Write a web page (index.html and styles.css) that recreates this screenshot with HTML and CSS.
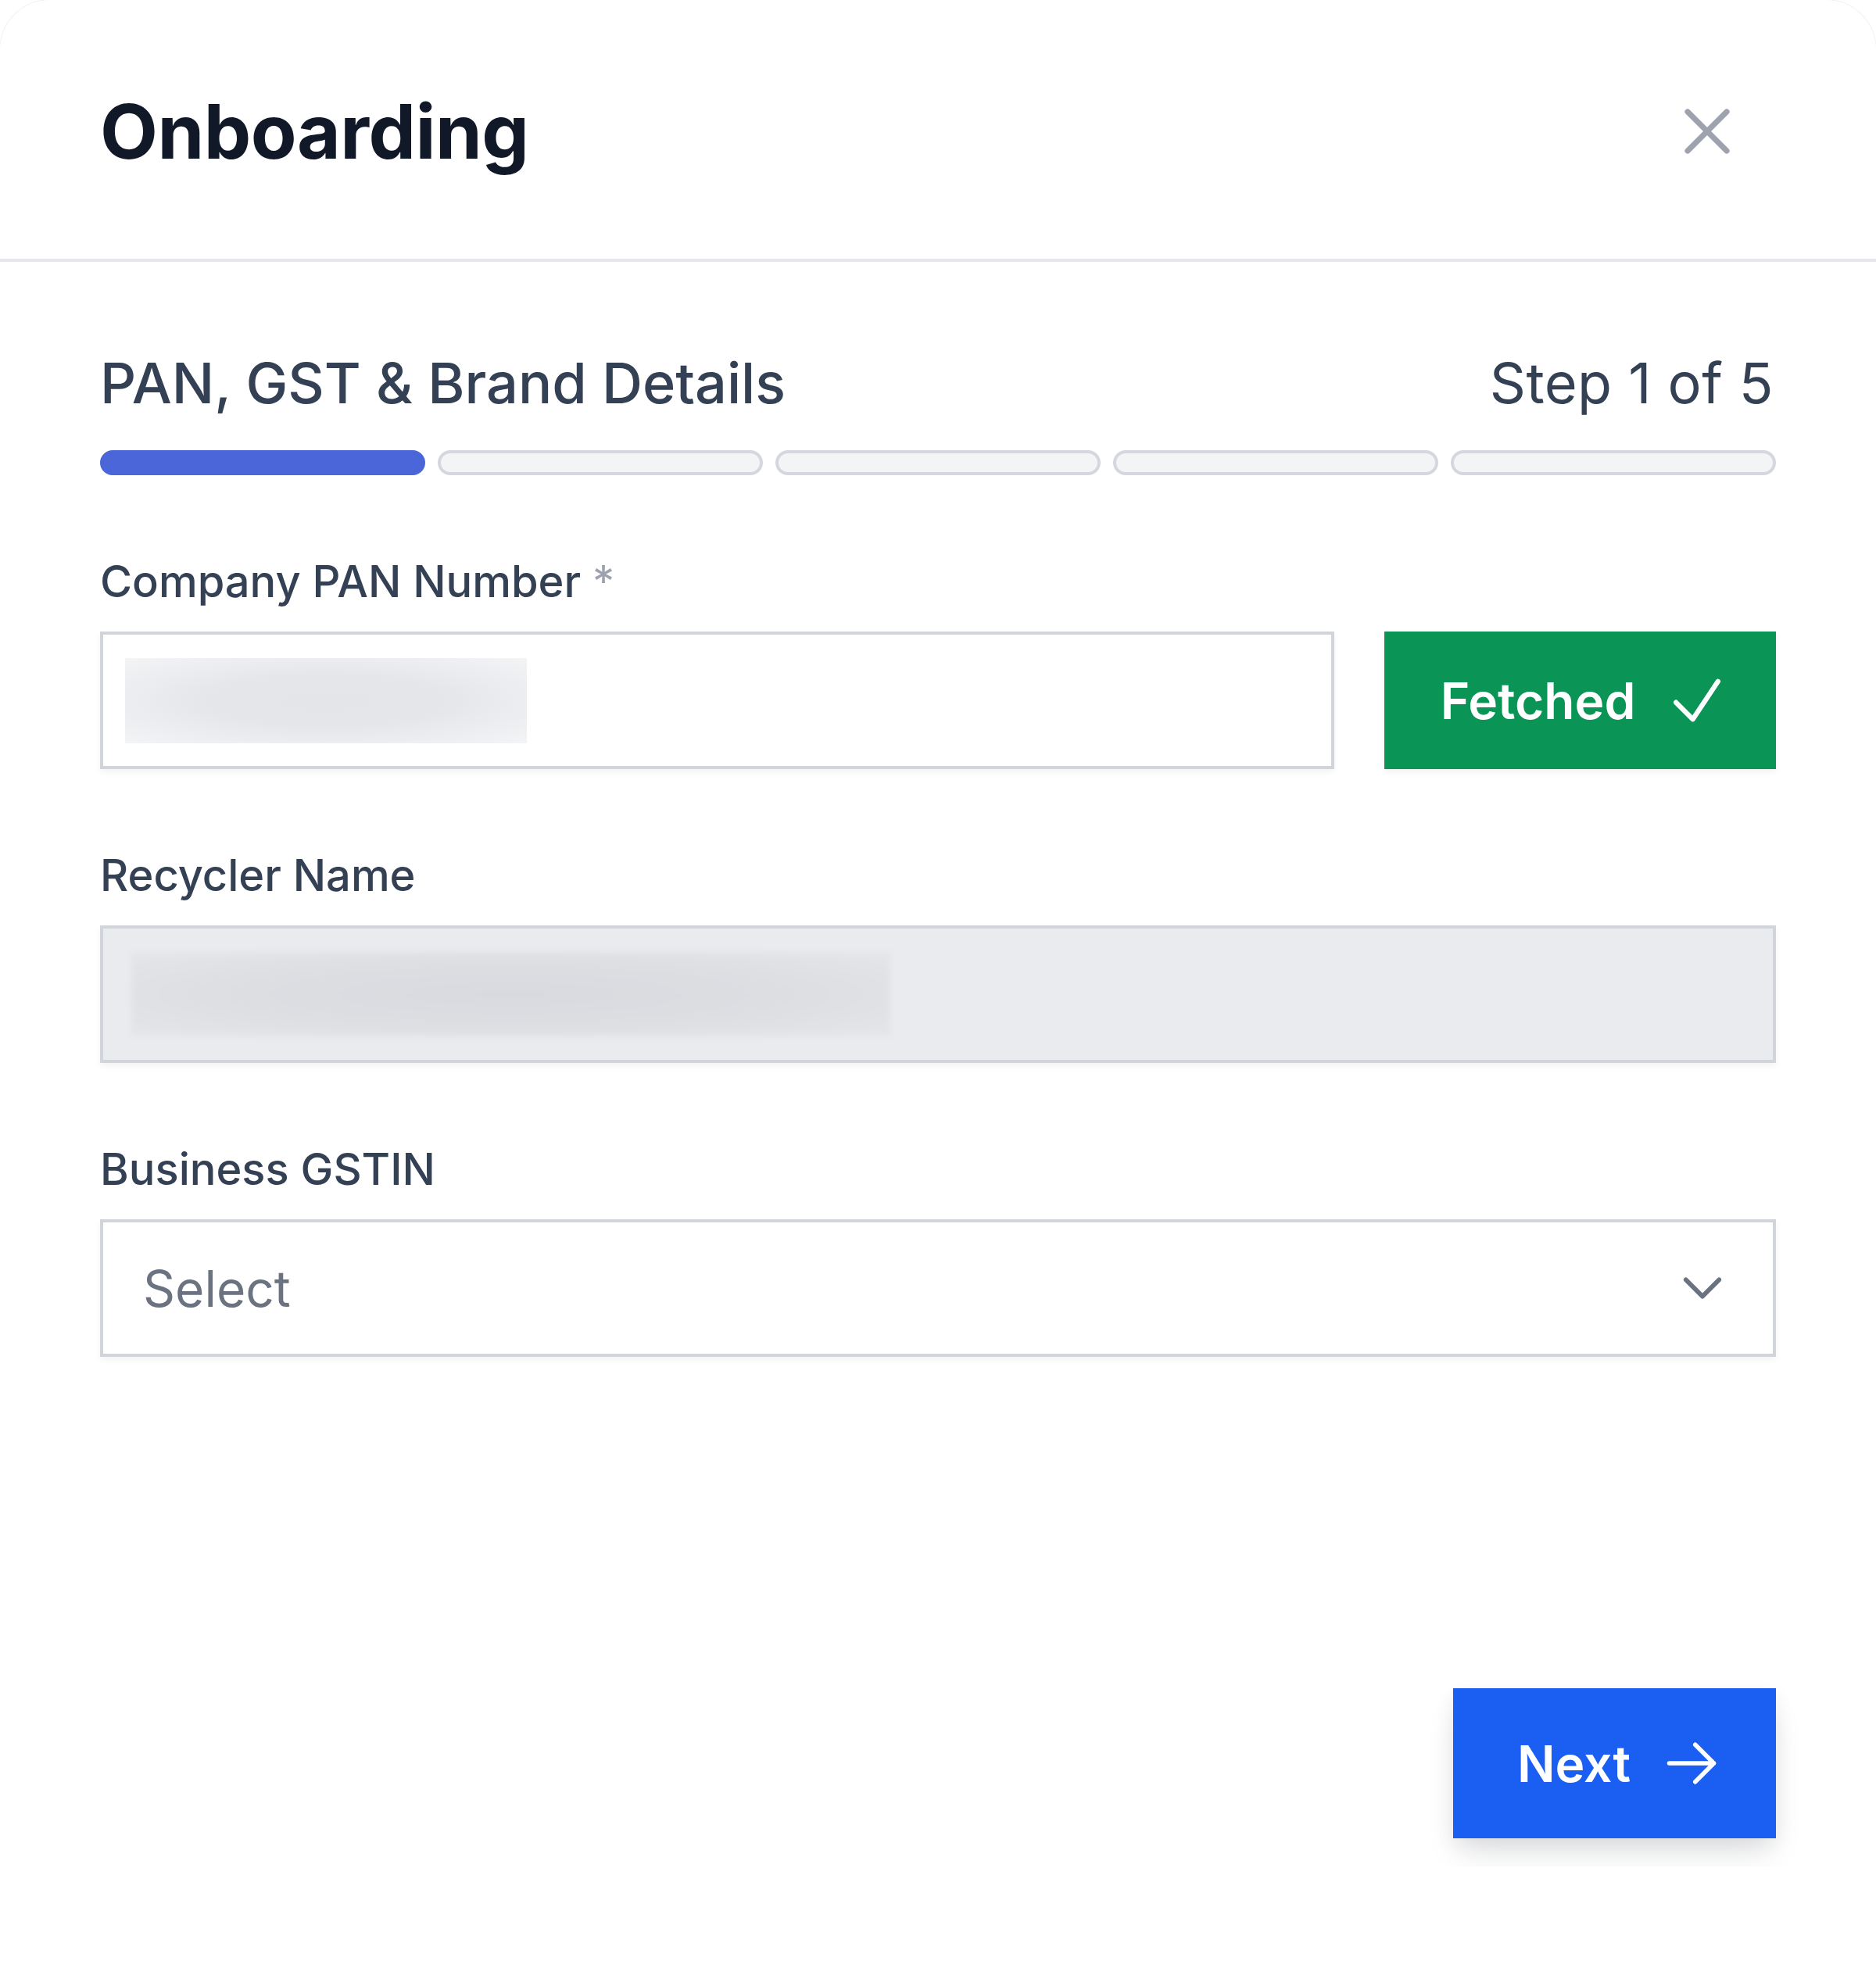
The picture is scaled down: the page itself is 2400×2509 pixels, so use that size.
FILE: index.html
```html
<!DOCTYPE html>
<html lang="en">
<head>
<meta charset="utf-8">
<title>Onboarding</title>
<link rel="stylesheet" href="styles.css">
</head>
<body>
<div class="modal">
  <header class="modal-header">
    <h1 class="modal-title">Onboarding</h1>
    <button class="close-btn" type="button" aria-label="Close">
      <svg viewBox="0 0 24 24" fill="none" stroke="currentColor" stroke-width="1.75" stroke-linecap="round" stroke-linejoin="round"><path d="M6 18L18 6M6 6l12 12"/></svg>
    </button>
  </header>
  <div class="modal-body">
    <div class="step-head">
      <h2 class="step-title">PAN, GST &amp; Brand Details</h2>
      <span class="step-count">Step 1 of 5</span>
    </div>
    <div class="progress">
      <span class="seg active"></span>
      <span class="seg"></span>
      <span class="seg"></span>
      <span class="seg"></span>
      <span class="seg"></span>
    </div>

    <div class="field">
      <label class="label">Company PAN Number <span class="req">*</span></label>
      <div class="row">
        <div class="input"><span class="redact redact-pan"></span></div>
        <button class="btn-fetched" type="button">
          <span>Fetched</span>
          <svg class="icon-check" viewBox="0 0 24 24" fill="none" stroke="currentColor" stroke-width="1.75" stroke-linecap="round" stroke-linejoin="round"><path d="M4.5 12.75l6 6 9-13.5"/></svg>
        </button>
      </div>
    </div>

    <div class="field">
      <label class="label">Recycler Name</label>
      <div class="row">
        <div class="input input-disabled"><span class="redact redact-name"></span></div>
      </div>
    </div>

    <div class="field">
      <label class="label">Business GSTIN</label>
      <div class="row">
        <div class="select">
          <span class="placeholder">Select</span>
          <svg class="icon-chevron" viewBox="0 0 24 24" fill="none" stroke="currentColor" stroke-width="2" stroke-linecap="round" stroke-linejoin="round"><path d="M19.5 8.25l-7.5 7.5-7.5-7.5"/></svg>
        </div>
      </div>
    </div>

    <div class="footer">
      <button class="btn-next" type="button">
        <span>Next</span>
        <svg class="icon-arrow" viewBox="0 0 24 24" fill="none" stroke="currentColor" stroke-width="1.75" stroke-linecap="round" stroke-linejoin="round"><path d="M13.5 4.5L21 12m0 0l-7.5 7.5M21 12H3"/></svg>
      </button>
    </div>
  </div>
</div>
</body>
</html>
```
FILE: styles.css
```css
* { box-sizing: border-box; }

html, body {
  margin: 0;
  padding: 0;
  background: #ffffff;
}

body {
  font-family: Inter, "Noto Sans", "Liberation Sans", sans-serif;
  color: #344054;
}

.modal {
  width: 2400px;
  min-height: 2509px;
  background: #ffffff;
  border-radius: 64px 64px 0 0;
  box-shadow: 0 0 0 1px rgba(17, 24, 39, 0.06);
}

.modal-header {
  height: 335px;
  padding: 5px 166px 0 128px;
  display: flex;
  align-items: center;
  justify-content: space-between;
  border-bottom: 4px solid #e5e7eb;
}

.modal-title {
  margin: 0;
  font-size: 96px;
  line-height: 128px;
  font-weight: 700;
  color: #111827;
  letter-spacing: -0.5px;
}

.close-btn {
  width: 100px;
  height: 100px;
  padding: 0;
  border: 0;
  background: transparent;
  color: #9ca3af;
  display: flex;
}

.close-btn svg {
  width: 100px;
  height: 100px;
}

.modal-body {
  margin: 0 96px;
  padding: 99px 32px 36px;
  overflow: hidden;
  display: flex;
  flex-direction: column;
}

.step-head {
  display: flex;
  justify-content: space-between;
  align-items: center;
  font-size: 72px;
  line-height: 112px;
}

.step-title {
  margin: 0;
  font-size: 72px;
  line-height: 112px;
  font-weight: 500;
  color: #344054;
}

.step-count {
  font-weight: 400;
  color: #344054;
  letter-spacing: 0.4px;
  margin-right: 3px;
}

.progress {
  margin-top: 30px;
  display: grid;
  grid-template-columns: repeat(5, 1fr);
  gap: 16px;
}

.seg {
  display: block;
  height: 32px;
  border-radius: 999px;
  background: #f3f4f6;
  border: 4px solid #d4d8de;
}

.seg.active {
  background: #4b66d9;
  border-color: #4b66d9;
}

.field {
  margin-top: 96px;
  display: flex;
  flex-direction: column;
}

.label {
  font-size: 56px;
  line-height: 80px;
  font-weight: 500;
  color: #344054;
}

.req {
  color: #9ca3af;
  font-weight: 400;
}

.row {
  margin-top: 24px;
  display: flex;
  gap: 64px;
}

.input {
  flex: 1;
  height: 176px;
  border: 4px solid #d1d5db;
  background: #ffffff;
  box-shadow: 0 4px 8px rgba(16, 24, 40, 0.05);
  padding: 28px 28px;
  display: flex;
  align-items: center;
}

.input-disabled {
  background: #eaebef;
  padding: 0 36px;
}

.redact {
  display: block;
}

.redact-pan {
  width: 514px;
  height: 109px;
  background: radial-gradient(ellipse at 50% 50%, #e3e4e8 0%, #e6e7ea 45%, #f3f4f6 100%);
}

.redact-name {
  width: 971px;
  height: 108px;
  background: radial-gradient(ellipse at 50% 50%, #d8dadf 0%, #dcdee2 50%, #e5e6ea 100%);
  filter: blur(3px);
}

.btn-fetched {
  width: 501px;
  height: 176px;
  border: 0;
  background: #0a9456;
  color: #ffffff;
  font-family: inherit;
  font-size: 64px;
  font-weight: 600;
  display: flex;
  align-items: center;
  justify-content: center;
  gap: 36px;
  padding: 0 0 0 14px;
  box-shadow: 0 4px 8px rgba(16, 24, 40, 0.05);
}

.icon-check {
  width: 86px;
  height: 86px;
}

.select {
  flex: 1;
  height: 176px;
  border: 4px solid #d1d5db;
  background: #ffffff;
  box-shadow: 0 4px 8px rgba(16, 24, 40, 0.05);
  padding: 0 56px 0 51px;
  display: flex;
  align-items: center;
  justify-content: space-between;
}

.placeholder {
  font-size: 64px;
  font-weight: 400;
  color: #6b7280;
}

.icon-chevron {
  width: 68px;
  height: 68px;
  color: #6b7280;
}

.footer {
  margin-top: 424px;
  display: flex;
  justify-content: flex-end;
}

.btn-next {
  width: 413px;
  height: 192px;
  border: 0;
  background: #1a5ef2;
  color: #ffffff;
  font-family: inherit;
  font-size: 64px;
  font-weight: 600;
  display: flex;
  align-items: center;
  justify-content: center;
  gap: 40px;
  padding: 0 0 0 12px;
  box-shadow: 0 24px 40px -8px rgba(17, 24, 39, 0.12), 0 8px 24px rgba(17, 24, 39, 0.06);
}

.icon-arrow {
  width: 76px;
  height: 76px;
}
```
